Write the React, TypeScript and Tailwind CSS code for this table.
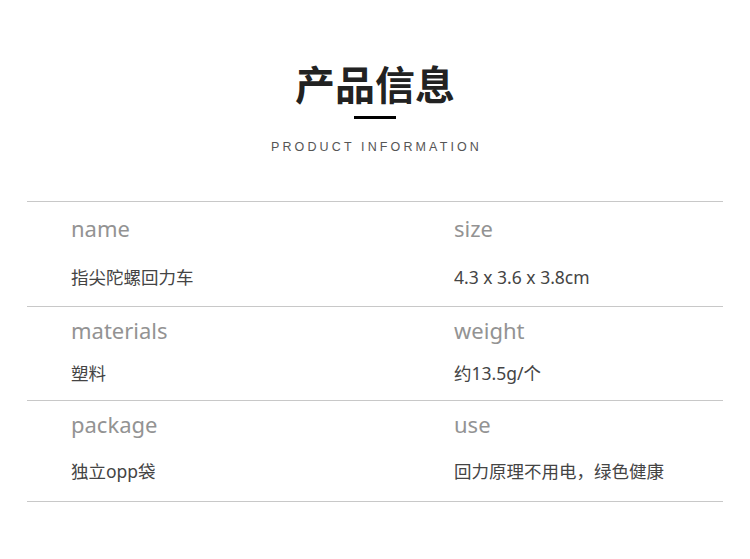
const rows = [
  {
    left: { label: 'name', value: '指尖陀螺回力车' },
    right: { label: 'size', value: '4.3 x 3.6 x 3.8cm' },
    pad: 'pt-[11px] h-[105px]',
    gap: 'mt-[22px]',
  },
  {
    left: { label: 'materials', value: '塑料' },
    right: { label: 'weight', value: '约13.5g/个' },
    pad: 'pt-[8px] h-[94px]',
    gap: 'mt-[16px]',
  },
  {
    left: { label: 'package', value: '独立opp袋' },
    right: { label: 'use', value: '回力原理不用电，绿色健康' },
    pad: 'pt-[8px] h-[101px]',
    gap: 'mt-[20px]',
  },
]

function Cell({ label, value, gap }: { label: string; value: string; gap: string }) {
  return (
    <div>
      <p className="text-[22px] leading-[30px] text-[#939393]">{label}</p>
      <p className={`${gap} text-[17.5px] leading-[24px] text-[#444]`}>{value}</p>
    </div>
  )
}

export default function App() {
  return (
    <div
      className="w-[750px] h-[559px] bg-white overflow-hidden"
      style={{ fontFamily: '"Noto Sans", "Noto Sans CJK SC", sans-serif' }}
    >
      <div className="flex flex-col items-center pt-[59px]">
        <h1
          className="text-[40px] leading-[48px] font-semibold text-[#222]"
          style={{ fontFamily: '"Noto Sans CJK SC", sans-serif' }}
        >
          产品信息
        </h1>
        <div className="mt-[9px] w-[42px] h-[3px] bg-black" />
        <p
          className="mt-[20px] text-[12.5px] leading-[16px] tracking-[0.25em] text-[#555] pl-[3px]"
          style={{ fontFamily: '"Liberation Sans", sans-serif' }}
        >
          PRODUCT INFORMATION
        </p>
      </div>

      <div className="mx-[27px] mt-[46px] w-[696px] border-t border-[#c8c8c8]">
        {rows.map((r) => (
          <div key={r.left.label} className={`grid grid-cols-[427px_1fr] border-b border-[#c8c8c8] ${r.pad}`}>
            <div className="pl-[44px]">
              <Cell label={r.left.label} value={r.left.value} gap={r.gap} />
            </div>
            <Cell label={r.right.label} value={r.right.value} gap={r.gap} />
          </div>
        ))}
      </div>
    </div>
  )
}
